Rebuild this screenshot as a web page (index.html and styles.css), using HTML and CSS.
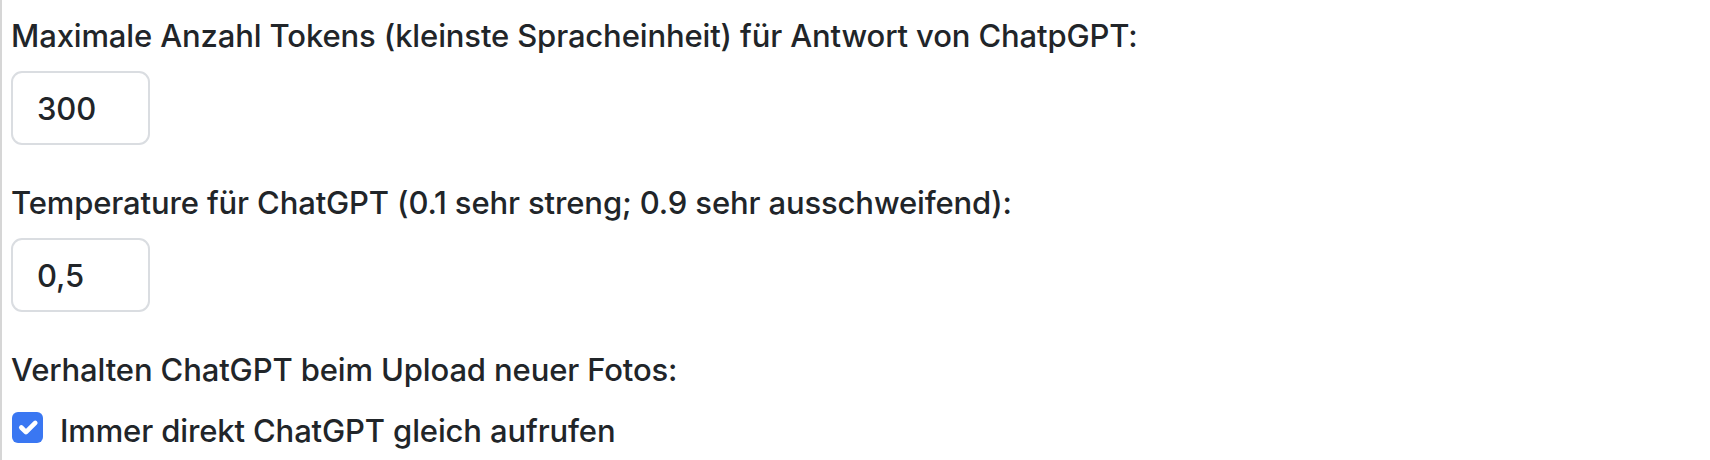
FILE: index.html
```html
<!DOCTYPE html>
<html lang="de">
<head>
<meta charset="utf-8">
<title>ChatGPT Einstellungen</title>
<link rel="stylesheet" href="styles.css">
</head>
<body>
<div class="panel">
  <div class="group">
    <label class="form-label" for="tokens">Maximale Anzahl Tokens (kleinste Spracheinheit) für Antwort von ChatpGPT:</label>
    <input class="form-control" id="tokens" type="text" value="300">
  </div>
  <div class="group">
    <label class="form-label" for="temp">Temperature für ChatGPT (0.1 sehr streng; 0.9 sehr ausschweifend):</label>
    <input class="form-control" id="temp" type="text" value="0,5">
  </div>
  <div class="group last">
    <div class="form-label">Verhalten ChatGPT beim Upload neuer Fotos:</div>
    <div class="form-check">
      <span class="check-box" aria-hidden="true">
        <svg viewBox="0 0 20 20" width="31" height="31"><path d="m6 10 3 3 6-6" fill="none" stroke="#fff" stroke-width="3" stroke-linecap="round" stroke-linejoin="round"/></svg>
      </span>
      <span class="check-label">Immer direkt ChatGPT gleich aufrufen</span>
    </div>
  </div>
</div>
</body>
</html>
```
FILE: styles.css
```css
html, body {
  margin: 0;
  padding: 0;
  background: #ffffff;
}
body {
  font-family: Inter, "Noto Sans", "Liberation Sans", sans-serif;
  font-size: 31px;
  font-weight: 500;
  letter-spacing: -0.13px;
  color: #212529;
}
.panel {
  border-left: 2px solid #d6d6d6;
  min-height: 460px;
  box-sizing: border-box;
  padding: 13px 0 0 9px;
}
.group {
  display: flex;
  flex-direction: column;
  align-items: flex-start;
  margin-bottom: 35px;
}
.group.last {
  margin-bottom: 0;
}
.form-label {
  display: block;
  line-height: 46px;
  margin-bottom: 12px;
}
.group.last .form-label {
  margin-bottom: 15px;
}
.form-control {
  box-sizing: border-box;
  width: 139px;
  height: 74px;
  padding: 0 24px;
  border: 2px solid #dadde1;
  border-radius: 11px;
  font-family: inherit;
  font-size: 31px;
  font-weight: 500;
  letter-spacing: -0.13px;
  color: #212529;
  background: #fff;
  outline: none;
}
.form-check {
  display: flex;
  align-items: flex-start;
  line-height: 46px;
  padding-left: 1px;
}
.check-box {
  display: flex;
  width: 31px;
  height: 31px;
  margin-top: 4px;
  border-radius: 6px;
  background: #3a77f2;
  flex-shrink: 0;
}
.check-label {
  margin-left: 17px;
}
```
